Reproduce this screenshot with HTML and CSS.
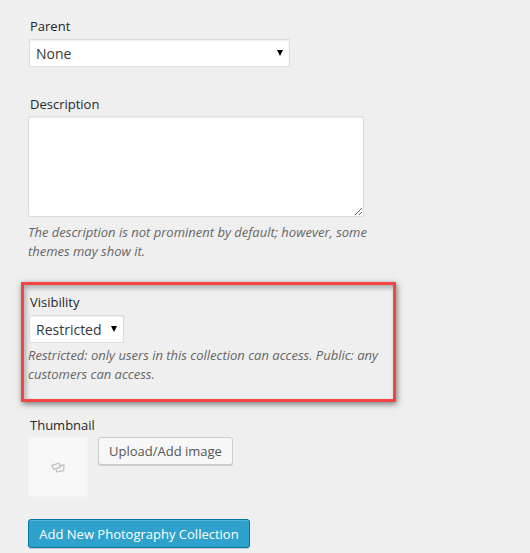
FILE: index.html
```html
<!DOCTYPE html>
<html lang="en">
<head>
  <meta charset="UTF-8">
  <meta name="viewport" content="width=device-width, initial-scale=1.0">
  <title>Add New Photography Collection</title>
  <link rel="stylesheet" href="styles.css">
</head>
<body>
  <form class="collection-form">
    <div class="field parent-field">
      <label class="field-label" for="parent">Parent</label>
      <div class="select-wrap parent-select">
        <select id="parent" class="select">
          <option>None</option>
        </select>
      </div>
    </div>

    <div class="field description-field">
      <label class="field-label" for="description">Description</label>
      <textarea id="description" class="textarea"></textarea>
      <p class="help">The description is not prominent by default; however, some themes may show it.</p>
    </div>

    <!-- Red callout drawn over the screenshot -->
    <div class="field visibility-field">
      <label class="field-label" for="visibility">Visibility</label>
      <div class="select-wrap visibility-select">
        <select id="visibility" class="select">
          <option>Restricted</option>
          <option>Public</option>
        </select>
      </div>
      <p class="help">Restricted: only users in this collection can access. Public: any customers can access.</p>
    </div>

    <div class="field thumbnail-field">
      <span class="field-label">Thumbnail</span>
      <div class="thumbnail-row">
        <div class="thumbnail">
          <svg class="thumbnail-icon" viewBox="0 0 14 11" width="14" height="11" aria-hidden="true">
            <path d="M5 4 L13 3 L12.6 8.8 L5.5 9.8 Z" fill="#f4f4f4" stroke="#c4c4c4" stroke-width="1.3" stroke-linejoin="round"/>
            <path d="M1 3.4 L8 1 L9.6 5.2 L2.6 7.4 Z" fill="#f4f4f4" stroke="#c4c4c4" stroke-width="1.3" stroke-linejoin="round"/>
          </svg>
        </div>
        <button type="button" class="btn">Upload/Add image</button>
      </div>
    </div>

    <button type="button" class="btn-primary">Add New Photography Collection</button>
  </form>
</body>
</html>
```

FILE: styles.css
```css
* { box-sizing: border-box; }
html, body {
  height: 553px;
  overflow: hidden;
}
body {
  margin: 0;
  background: #efefef;
  color: #222;
  font-family: 'Open Sans', sans-serif;
  font-size: 13px;
}
.collection-form {
  padding: 17px 0 0 28px;
}
.field-label {
  display: block;
  padding-left: 2px;
  line-height: 19px;
  color: #23282d;
}
.select-wrap {
  position: relative;
  margin: 3px 0 0 1px;
  height: 28px;
}
.select-wrap::after {
  content: "";
  position: absolute;
  top: 11px;
  right: 7px;
  border-top: 6px solid #000;
  border-left: 3px solid transparent;
  border-right: 3px solid transparent;
  pointer-events: none;
}
.parent-select { width: 261px; }
.visibility-select { width: 95px; }
.select {
  display: block;
  width: 100%;
  height: 28px;
  margin: 0;
  padding: 0 20px 0 6px;
  appearance: none;
  background: #fff;
  border: 1px solid #ddd;
  border-radius: 0;
  color: #32373c;
  font-family: inherit;
  font-size: 14px;
  box-shadow: inset 0 1px 2px rgba(0,0,0,0.07);
}
.textarea {
  display: block;
  width: 336px;
  height: 101px;
  margin: 2px 0 0;
  background: #fff;
  border: 1px solid #ddd;
  border-radius: 0;
  box-shadow: inset 0 1px 2px rgba(0,0,0,0.07);
}
.help {
  margin: 6px 0 0;
  line-height: 19px;
  color: #666;
  font-size: 13px;
  font-style: italic;
}
.description-field { margin-top: 28px; }
.description-field .help { width: 345px; }
.visibility-field {
  width: 375px;
  margin: 21px 0 0 -7px;
  padding: 8px 10px 15px 4px;
  border: 3px solid #f44545;
  box-shadow: 1px 2px 6px rgba(0,0,0,0.5), inset 2px 3px 5px rgba(0,0,0,0.28);
}
.visibility-field .help { margin-top: 3px; }
.thumbnail-field { margin-top: 14px; }
.thumbnail-row {
  display: flex;
  align-items: flex-start;
  gap: 10px;
  margin-top: 2px;
}
.thumbnail {
  display: flex;
  align-items: center;
  justify-content: center;
  width: 60px;
  height: 60px;
  background: linear-gradient(45deg, #f8f8f8 49.5%, #f3f3f3 50%, #f8f8f8 50.5%);
  border: 1px solid #f3f3f3;
}
.btn {
  height: 28px;
  padding: 0 10px;
  background: #f7f7f7;
  border: 1px solid #ccc;
  border-radius: 3px;
  color: #555;
  font-family: inherit;
  font-size: 13px;
  box-shadow: 0 1px 0 #ccc;
}
.btn-primary {
  display: block;
  width: 222px;
  height: 29px;
  margin-top: 22px;
  padding: 0 10px;
  background: #2ea2cc;
  border: 1px solid #0074a2;
  border-radius: 3px;
  color: #fff;
  font-family: inherit;
  font-size: 13px;
  box-shadow: inset 0 1px 0 rgba(120,200,230,0.5), 0 1px 0 rgba(0,0,0,0.15);
}
```
